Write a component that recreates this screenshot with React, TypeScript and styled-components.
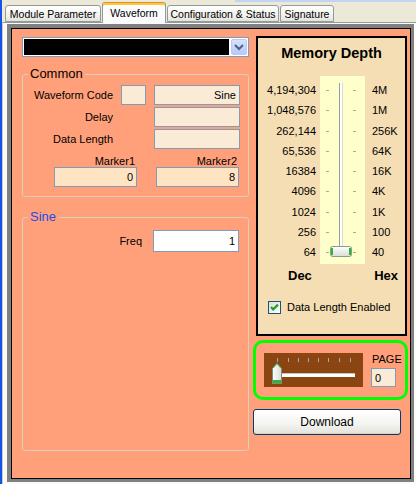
import React from 'react'
import styled, { createGlobalStyle } from 'styled-components'

const GlobalStyle = createGlobalStyle`
  html, body {
    margin: 0;
    padding: 0;
  }
  body {
    width: 416px;
    height: 484px;
    overflow: hidden;
    background: #ece9d8;
    font-family: "Liberation Sans", Arial, sans-serif;
    font-size: 11px;
    color: #000;
  }
  * {
    box-sizing: border-box;
  }
`

const tabs = [
  { label: 'Module Parameter', width: 96 },
  { label: 'Waveform', width: 64, active: true },
  { label: 'Configuration & Status', width: 112 },
  { label: 'Signature', width: 54 },
]

const depths = [
  ['4,194,304', '4M'],
  ['1,048,576', '1M'],
  ['262,144', '256K'],
  ['65,536', '64K'],
  ['16384', '16K'],
  ['4096', '4K'],
  ['1024', '1K'],
  ['256', '100'],
  ['64', '40'],
]

const ROW_H = 20.25
const pageTicks = [13, 24, 34, 44, 54, 64, 75, 86]

export default function App() {
  return (
    <Window>
      <GlobalStyle />
      <EdgeStrip />
      <Main>
        <TopStrip />
        <TabStrip>
          {tabs.map(t => (
            <Tab key={t.label} $width={t.width} $active={t.active}>
              {t.label}
            </Tab>
          ))}
        </TabStrip>

        <TabPage>
          <Frame>
            <Panel>
              <LeftCol>
                <Combo>
                  <ComboText />
                  <ComboButton>
                    <svg width="14" height="14" viewBox="0 0 14 14">
                      <path d="M3 5 L7 9 L11 5" fill="none" stroke="#4d6185" strokeWidth="2" />
                    </svg>
                  </ComboButton>
                </Combo>

                <Group>
                  <Legend>Common</Legend>
                  <FieldGrid>
                    <FieldLabel>Waveform Code</FieldLabel>
                    <Box $bg="#faebd7" />
                    <Box $bg="#faebd7" $align="right" readOnly defaultValue="Sine" />
                    <FieldLabel>Delay</FieldLabel>
                    <Box $bg="#faebd7" $col={3} readOnly />
                    <FieldLabel>Data Length</FieldLabel>
                    <Box $bg="#faebd7" $col={3} readOnly />
                  </FieldGrid>
                  <MarkerRow>
                    <MarkerField>
                      <MarkerLabel>Marker1</MarkerLabel>
                      <Box $bg="#ffe4c4" $align="right" readOnly defaultValue="0" />
                    </MarkerField>
                    <MarkerField>
                      <MarkerLabel>Marker2</MarkerLabel>
                      <Box $bg="#ffe4c4" $align="right" readOnly defaultValue="8" />
                    </MarkerField>
                  </MarkerRow>
                </Group>

                <SineGroup>
                  <Legend $blue>Sine</Legend>
                  <FreqRow>
                    <FreqLabel>Freq</FreqLabel>
                    <FreqBox readOnly defaultValue="1" />
                  </FreqRow>
                </SineGroup>
              </LeftCol>

              <RightCol>
                <DepthPanel>
                  <DepthTitle>Memory Depth</DepthTitle>
                  <Scale>
                    <ScaleCol $align="right" $width={58}>
                      {depths.map(([dec]) => (
                        <ScaleCell key={dec}>{dec}</ScaleCell>
                      ))}
                    </ScaleCol>
                    <Track>
                      <svg width="45" height="188" viewBox="0 0 45 188">
                        <defs>
                          <linearGradient id="vthumb" x1="0" y1="0" x2="0" y2="1">
                            <stop offset="0" stopColor="#ffffff" />
                            <stop offset="1" stopColor="#d8dcd8" />
                          </linearGradient>
                        </defs>
                        {depths.map((_, i) => {
                          const y = Math.round(4 + ROW_H / 2 + ROW_H * i)
                          return (
                            <g key={i}>
                              <rect x="6" y={y} width="3" height="1" fill="#a8a8a8" />
                              <rect x="33" y={y} width="3" height="1" fill="#a8a8a8" />
                            </g>
                          )
                        })}
                        <rect x="19" y="7" width="4" height="168" fill="#ffffff" />
                        <rect x="19" y="7" width="1" height="168" fill="#9d9d9d" />
                        <rect x="22" y="7" width="1" height="168" fill="#d8d8d8" />
                        <rect x="10.5" y="170.5" width="21" height="10" rx="2" fill="url(#vthumb)" stroke="#8c9a8c" />
                        <rect x="11" y="172" width="2" height="7" fill="#2fb52f" />
                        <rect x="29" y="172" width="2" height="7" fill="#2fb52f" />
                      </svg>
                    </Track>
                    <ScaleCol $align="left" $width={33} $gap={7}>
                      {depths.map(([dec, hex]) => (
                        <ScaleCell key={dec}>{hex}</ScaleCell>
                      ))}
                    </ScaleCol>
                  </Scale>
                  <UnitRow>
                    <Unit>Dec</Unit>
                    <Unit>Hex</Unit>
                  </UnitRow>
                  <CheckRow>
                    <svg width="13" height="13" viewBox="0 0 13 13">
                      <defs>
                        <linearGradient id="cbox" x1="0" y1="0" x2="1" y2="1">
                          <stop offset="0" stopColor="#dcdcd6" />
                          <stop offset="1" stopColor="#ffffff" />
                        </linearGradient>
                      </defs>
                      <rect x="0.5" y="0.5" width="12" height="12" fill="url(#cbox)" stroke="#1c5180" />
                      <path d="M3 6 L5.2 8.4 L10 3.6" fill="none" stroke="#21a121" strokeWidth="2.2" />
                    </svg>
                    <CheckText>Data Length Enabled</CheckText>
                  </CheckRow>
                </DepthPanel>

                <PageBox>
                  <PageSlider>
                    <svg width="99" height="34" viewBox="0 0 99 34">
                      <defs>
                        <linearGradient id="hthumb" x1="0" y1="0" x2="1" y2="0">
                          <stop offset="0" stopColor="#ffffff" />
                          <stop offset="1" stopColor="#dcdcd8" />
                        </linearGradient>
                      </defs>
                      {pageTicks.map(x => (
                        <rect key={x} x={x} y="5" width="1" height="4" fill="#a9a9a9" />
                      ))}
                      <rect x="9" y="20" width="82" height="4" fill="#ffffff" />
                      <rect x="9" y="20" width="82" height="1" fill="#c9c5b9" />
                      <path d="M8.5 15.5 L13 10.5 L17.5 15.5 V30.5 H8.5 Z" fill="url(#hthumb)" stroke="#7f8c7f" />
                      <path d="M9 15.5 L13 11 L17 15.5" fill="none" stroke="#5fd35f" />
                      <rect x="9" y="27" width="8" height="3" fill="#2fb52f" />
                    </svg>
                  </PageSlider>
                  <PageCol>
                    <PageLabel>PAGE</PageLabel>
                    <PageInput readOnly defaultValue="0" />
                  </PageCol>
                </PageBox>

                <DownloadButton>Download</DownloadButton>
              </RightCol>
            </Panel>
          </Frame>
        </TabPage>
      </Main>
    </Window>
  )
}

const Window = styled.div`
  display: flex;
  width: 416px;
  height: 484px;
`

const EdgeStrip = styled.div`
  width: 2px;
  background: #1355e6;
`

const Main = styled.div`
  flex: 1;
  display: flex;
  flex-direction: column;
`

const TopStrip = styled.div`
  height: 2px;
  background: linear-gradient(to right, transparent 233px, #c3d3f2 233px);
`

const TabStrip = styled.div`
  height: 20px;
  display: flex;
  align-items: flex-end;
  gap: 1px;
  padding-left: 3px;
`

const Tab = styled.div<{ $width: number; $active?: boolean }>`
  position: relative;
  z-index: ${p => (p.$active ? 1 : 0)};
  width: ${p => p.$width}px;
  height: ${p => (p.$active ? 21 : 17)}px;
  margin-bottom: ${p => (p.$active ? -1 : 0)}px;
  display: flex;
  align-items: center;
  justify-content: center;
  white-space: nowrap;
  font-size: 10.5px;
  border: 1px solid #919b9c;
  border-bottom: ${p => (p.$active ? 'none' : '1px solid #919b9c')};
  border-top: 1px solid ${p => (p.$active ? '#e68b2c' : '#919b9c')};
  border-radius: 3px 3px 0 0;
  background: ${p =>
    p.$active ? '#fcfcfe' : 'linear-gradient(#ffffff, #f0efea 70%, #e3e2da)'};
  box-shadow: ${p => (p.$active ? 'inset 0 2px 0 #ffc83c' : 'none')};
`

const TabPage = styled.div`
  flex: 1;
  display: flex;
  border-top: 1px solid #919b9c;
  border-left: 1px solid #c9ccc9;
  background: #fbfbf8;
  padding: 1px 2px 2px 4px;
`

const Frame = styled.div`
  flex: 1;
  display: flex;
  border-style: solid;
  border-color: #808080;
  border-width: 4px 3px 3px 4px;
`

const Panel = styled.div`
  flex: 1;
  display: flex;
  gap: 4px;
  border: 1px solid #000;
  background: #ffa07a;
  padding: 8px 2px 0 10px;
`

const LeftCol = styled.div`
  width: 227px;
  display: flex;
  flex-direction: column;
`

const Combo = styled.div`
  height: 20px;
  display: flex;
  gap: 2px;
  padding: 1px;
  border: 1px solid #7f9db9;
  background: #fff;
`

const ComboText = styled.div`
  flex: 1;
  background: #000;
`

const ComboButton = styled.div`
  width: 16px;
  display: flex;
  align-items: center;
  justify-content: center;
  border: 1px solid #b9cbf3;
  border-radius: 2px;
  background: linear-gradient(#d6e2fd, #b7cbf7);
`

const Group = styled.fieldset`
  margin: 10px 0 0;
  padding: 4px 8px 9px 0;
  border: 1px solid #d6d0bc;
  border-radius: 3px;
  min-width: 0;
`

const SineGroup = styled(Group)`
  margin-top: 13px;
  height: 241px;
  padding-top: 6px;
`

const Legend = styled.legend<{ $blue?: boolean }>`
  margin-left: 5px;
  padding: 0 2px;
  font-size: 13px;
  line-height: 14px;
  color: ${p => (p.$blue ? '#1e4cf0' : '#000')};
`

const FieldGrid = styled.div`
  display: grid;
  grid-template-columns: 90px 25px 86px;
  grid-auto-rows: 20px;
  column-gap: 8px;
  row-gap: 2px;
`

const FieldLabel = styled.div`
  grid-column: 1;
  align-self: center;
  text-align: right;
`

const Box = styled.input<{ $bg: string; $align?: string; $col?: number }>`
  grid-column: ${p => p.$col ?? 'auto'};
  width: 100%;
  height: 20px;
  margin: 0;
  padding: 0 3px;
  border: 1px solid #7f9db9;
  background: ${p => p.$bg};
  font: inherit;
  font-size: 11px;
  color: #000;
  text-align: ${p => p.$align ?? 'left'};
  outline: none;
`

const MarkerRow = styled.div`
  display: flex;
  gap: 19px;
  margin-top: 6px;
  padding-left: 31px;
`

const MarkerField = styled.div`
  width: 83px;
  display: flex;
  flex-direction: column;
`

const MarkerLabel = styled.div`
  height: 12px;
  line-height: 13px;
  text-align: right;
  padding-right: 2px;
`

const FreqRow = styled.div`
  display: flex;
  align-items: center;
  justify-content: flex-end;
  padding-right: 1px;
`

const FreqLabel = styled.div`
  margin-right: 11px;
  font-size: 11px;
`

const FreqBox = styled(Box).attrs({ $bg: '#fff', $align: 'right' })`
  width: 86px;
  height: 22px;
`

const RightCol = styled.div`
  width: 155px;
  display: flex;
  flex-direction: column;
`

const DepthPanel = styled.div`
  margin: -1px 0 0 3px;
  width: 151px;
  height: 300px;
  border: 2px solid #000;
  background: #f5deb3;
  padding-top: 7px;
`

const DepthTitle = styled.div`
  text-align: center;
  font-weight: bold;
  font-size: 14.5px;
  line-height: 17px;
`

const Scale = styled.div`
  display: flex;
  margin-top: 14px;
`

const ScaleCol = styled.div<{ $align: string; $width: number; $gap?: number }>`
  width: ${p => p.$width}px;
  margin-left: ${p => p.$gap ?? 0}px;
  padding-top: 4px;
  text-align: ${p => p.$align};
`

const ScaleCell = styled.div`
  height: ${ROW_H}px;
  line-height: ${ROW_H}px;
  white-space: nowrap;
`

const Track = styled.div`
  width: 45px;
  height: 188px;
  margin-left: 4px;
  background: #ffffcc;
  svg {
    display: block;
  }
`

const UnitRow = styled.div`
  display: flex;
  justify-content: space-between;
  margin-top: 4px;
  padding: 0 7px 0 30px;
`

const Unit = styled.div`
  font-weight: bold;
  font-size: 13px;
  line-height: 15px;
`

const CheckRow = styled.div`
  display: flex;
  align-items: center;
  gap: 6px;
  margin-top: 18px;
  padding-left: 10px;
  svg {
    display: block;
  }
`

const CheckText = styled.span`
  line-height: 13px;
`

const PageBox = styled.div`
  margin-top: 4px;
  height: 60px;
  display: flex;
  border: 3px solid #00ff00;
  border-radius: 10px;
  padding: 10px 0 0 8px;
`

const PageSlider = styled.div`
  width: 99px;
  height: 34px;
  background: #8b4513;
  svg {
    display: block;
  }
`

const PageCol = styled.div`
  margin-left: 8px;
  display: flex;
  flex-direction: column;
`

const PageLabel = styled.div`
  font-size: 11px;
  line-height: 13px;
  margin-bottom: 2px;
  padding-left: 1px;
`

const PageInput = styled.input`
  width: 25px;
  height: 19px;
  margin: 0;
  padding: 0 3px;
  border: 1px solid #7f9db9;
  background: #faebd7;
  font: inherit;
  font-size: 11px;
  outline: none;
`

const DownloadButton = styled.button`
  margin-top: 9px;
  width: 148px;
  height: 26px;
  padding: 0;
  border: 1px solid #003c74;
  border-radius: 3px;
  background: linear-gradient(#ffffff, #f4f4f0 60%, #e2e1da);
  box-shadow: inset 0 -1px 0 #d6d0c5;
  font-family: "Liberation Sans", Arial, sans-serif;
  font-size: 12px;
  color: #000;
`
